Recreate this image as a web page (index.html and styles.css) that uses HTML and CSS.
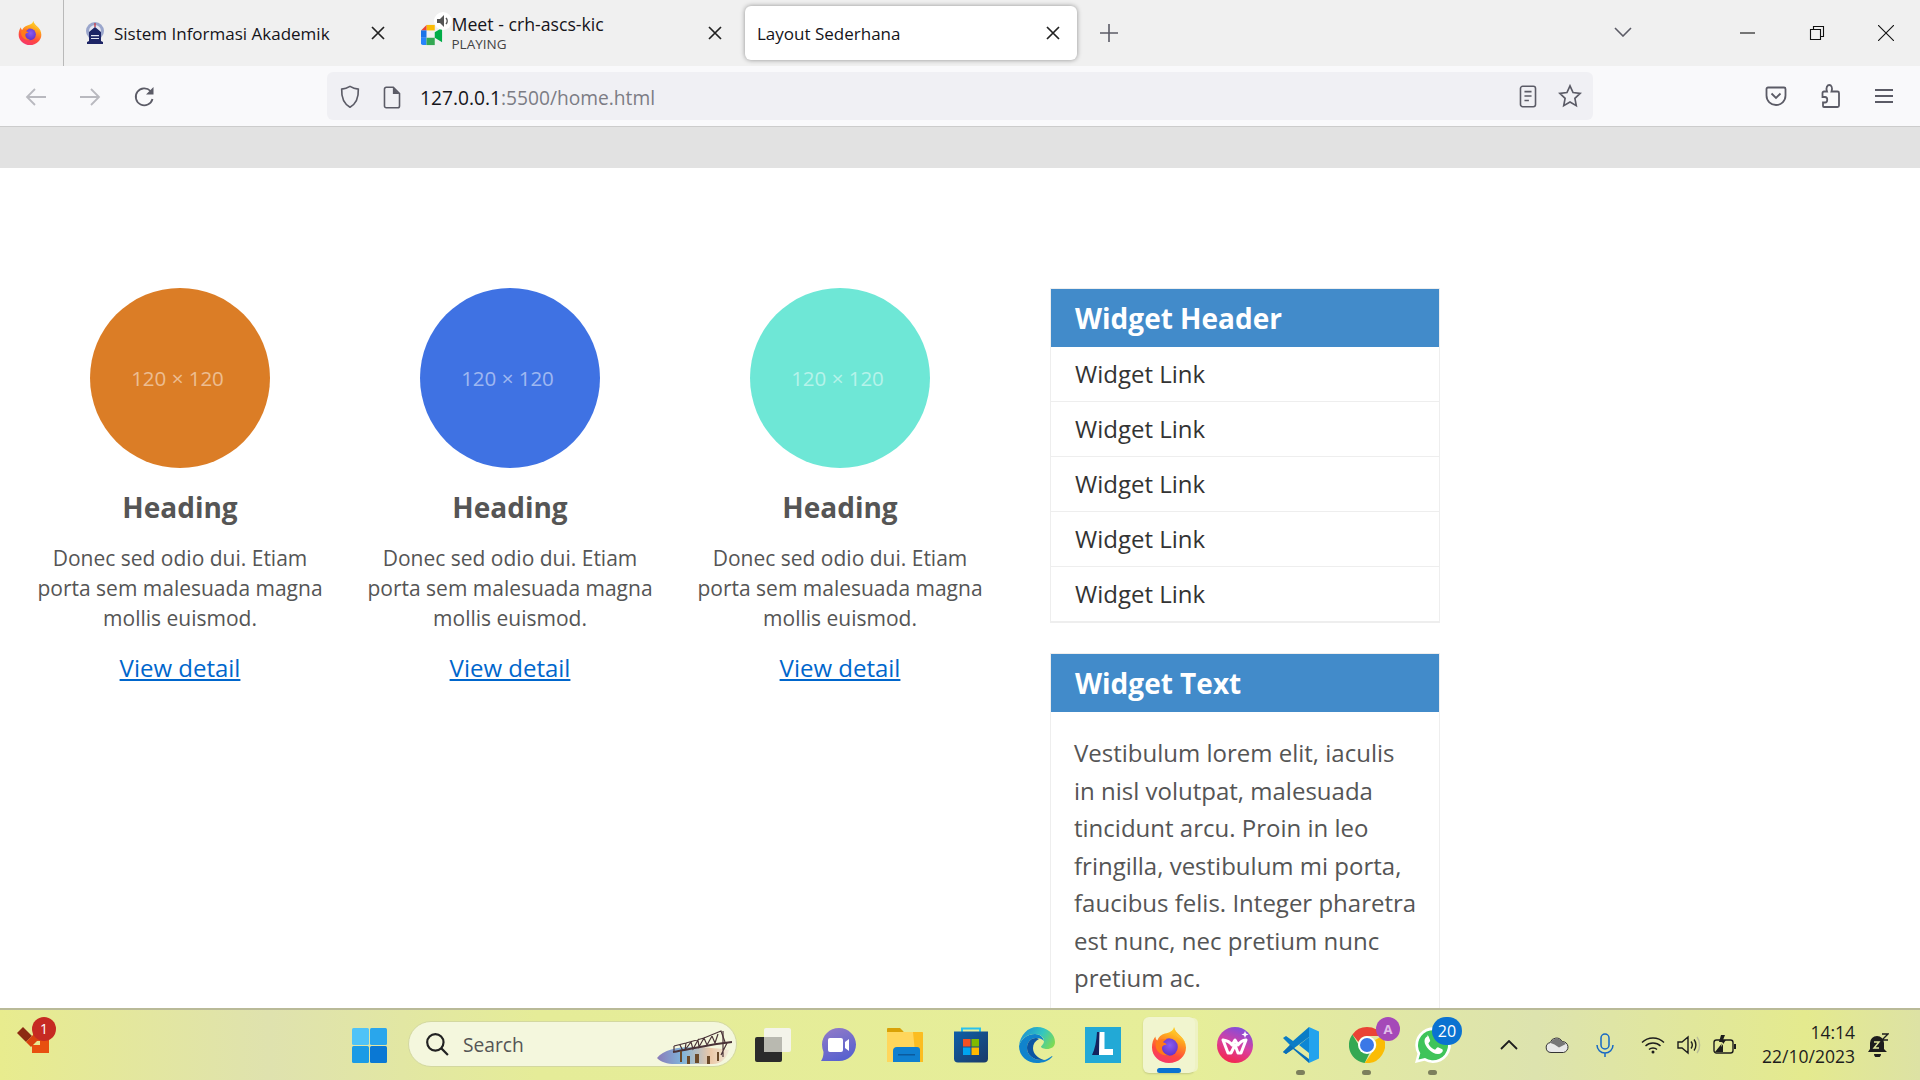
FILE: index.html
```html
<!DOCTYPE html>
<html lang="en">
<head>
  <meta charset="UTF-8" />
  <title>Layout Sederhana</title>
  <link rel="stylesheet" href="styles.css">
</head>
<body>

  <svg class="svg-defs" aria-hidden="true">
    <defs>
      <linearGradient id="ffBody" x1="0.7" y1="0" x2="0.3" y2="1">
        <stop offset="0" stop-color="#ffe226"/>
        <stop offset="0.35" stop-color="#ff9a1f"/>
        <stop offset="0.7" stop-color="#ff4a3d"/>
        <stop offset="1" stop-color="#f5356f"/>
      </linearGradient>
      <radialGradient id="ffCore" cx="0.55" cy="0.4" r="0.7">
        <stop offset="0" stop-color="#8a5cf0"/>
        <stop offset="1" stop-color="#5b2bc4"/>
      </radialGradient>
      <symbol id="firefox" viewBox="0 0 36 36">
        <path fill="url(#ffBody)" d="M23 0c.6 3.600 2.800 5.700 5.600 8.200C32.600 11.800 35 15.800 35 20.500 35 29.300 27.400 36 18 36S1 29.300 1 20.500c0-4.300 1.200-8.400 3.400-11 .1 2 .8 3.300 1.900 4 1.300-3.300 4-6 7.700-6.900C18.400 5.500 22 4.400 23 0z"/>
        <path fill="#ffbd2e" d="M23 0c.6 3.600 2.800 5.700 5.600 8.200 2.700 2.400 4.900 5.400 5.900 8.700-1.800-3.300-4.700-5.500-8-6.800C23.800 7.200 22.500 4 23 0z"/>
        <circle cx="18" cy="20" r="8.800" fill="url(#ffCore)"/>
        <path fill="#ff7a1a" d="M5 15c3-2.400 6.500-3.500 10.800-2.800-1.900.9-3.200 1.800-3.800 3 2 .5 3.300 1.300 3.600 2.500-3.400.2-4.600 1.600-4.600 3.300 0 3.500 3 6.800 7.500 7.300C11.300 29.500 4.600 25 4.600 18c0-1 .1-2 .4-3z"/>
      </symbol>
    </defs>
  </svg>

  <div class="tabbar">
    <div class="ff-btn">
      <svg class="ff-btn-logo"><use href="#firefox"/></svg>
    </div>
    <div class="tabs">
      <div class="tab">
        <svg class="tab-icon" viewBox="0 0 22 22">
          <circle cx="11" cy="9" r="9" fill="#9aa6cc"/>
          <circle cx="11" cy="9" r="6" fill="#e4e6f2"/>
          <path fill="#1d2566" d="M3 22v-2l2-1v-9l6-5 6 5v9l2 1v2z"/>
          <path fill="#c8404a" d="M10.300 1h1.400v4h-1.400z"/>
          <path fill="#e4e6f2" d="M7 13h8v1.200H7zM7 16h8v1H7z"/>
        </svg>
        <span class="tab-title">Sistem Informasi Akademik</span>
        <svg class="tab-close" viewBox="0 0 14 14"><path d="M1 1l12 12M13 1L1 13"/></svg>
      </div>
      <div class="tab tab-meet">
        <span class="meet-wrap">
          <svg class="tab-icon" viewBox="0 0 24 22">
            <path fill="#fbbc04" d="M6 0h9v6H6z"/>
            <path fill="#ea4335" d="M6 0v6H0z"/>
            <path fill="#1a73e8" d="M0 6h6v8H0z"/>
            <path fill="#2684fc" d="M0 14h6v8H2a2 2 0 0 1-2-2z"/>
            <path fill="#34a853" d="M6 14h9v8H6z"/>
            <path fill="#00ac47" d="M15 8l8-5v16l-8-5z"/>
          </svg>
          <span class="speaker">
            <svg viewBox="0 0 14 14"><path fill="#555" d="M1 5h3l4-4v12L4 9H1z"/><path fill="none" stroke="#555" stroke-width="1.500" d="M10 4c1.500 1.600 1.500 4.400 0 6"/></svg>
          </span>
        </span>
        <div class="tab-stack">
          <span class="tab-title">Meet - crh-ascs-kic</span>
          <span class="tab-sub">PLAYING</span>
        </div>
        <svg class="tab-close" viewBox="0 0 14 14"><path d="M1 1l12 12M13 1L1 13"/></svg>
      </div>
      <div class="tab tab-active">
        <span class="tab-title">Layout Sederhana</span>
        <svg class="tab-close" viewBox="0 0 14 14"><path d="M1 1l12 12M13 1L1 13"/></svg>
      </div>
    </div>
    <div class="new-tab">
      <svg viewBox="0 0 18 18"><path d="M9 0v18M0 9h18"/></svg>
    </div>
    <div class="tab-list">
      <svg viewBox="0 0 18 10"><path d="M1 1l8 8 8-8"/></svg>
    </div>
    <div class="win-btn">
      <svg viewBox="0 0 16 16"><path d="M0 8h15"/></svg>
    </div>
    <div class="win-btn">
      <svg viewBox="0 0 16 16"><path d="M1.500 4.500h10v10h-10zM4.500 4.500v-3h10v10h-3"/></svg>
    </div>
    <div class="win-btn">
      <svg viewBox="0 0 16 16"><path d="M0 0l16 16M16 0L0 16"/></svg>
    </div>
  </div>

  <div class="toolbar">
    <div class="nav-btn nav-left nav-off">
      <svg viewBox="0 0 22 20"><path d="M21 10H2M10 2l-8 8 8 8"/></svg>
    </div>
    <div class="nav-btn nav-left nav-off">
      <svg viewBox="0 0 22 20"><path d="M1 10h19M12 2l8 8-8 8"/></svg>
    </div>
    <div class="nav-btn nav-left">
      <svg viewBox="0 0 22 22"><path d="M19.500 13a8.500 8.500 0 1 1-2-8"/><path class="solid" d="M20.500 1v7.500H13z"/></svg>
    </div>
    <div class="urlbar">
      <svg class="url-icon url-shield" viewBox="0 0 22 26"><path d="M11 1.500c3 1.800 6 2.700 9 3 .4 9-2.500 16-9 19.500C4.500 20.500 1.600 13.500 2 4.500c3-.3 6-1.200 9-3z"/></svg>
      <svg class="url-icon url-page" viewBox="0 0 20 26"><path d="M3.500 1.500h8l7 7v14a2 2 0 0 1-2 2h-13a2 2 0 0 1-2-2v-19a2 2 0 0 1 2-2z"/><path class="solid" d="M11 1.500l7.500 7.500H11z"/></svg>
      <span class="url-text"><span class="url-host">127.0.0.1</span>:5500/home.html</span>
      <svg class="url-icon url-reader" viewBox="0 0 20 26"><rect x="1.500" y="1.500" width="17" height="23" rx="2.500"/><path d="M6 7.500h8M6 12.500h8M6 17.500h5"/></svg>
      <svg class="url-icon url-star" viewBox="0 0 26 26"><path d="M13 2l3.300 7.300 7.700.9-5.700 5.300 1.500 7.900L13 19.500l-6.800 3.900 1.500-7.900L2 10.200l7.700-.9z"/></svg>
    </div>
    <div class="nav-btn">
      <svg viewBox="0 0 22 22"><path d="M3 2.500h16a1.500 1.500 0 0 1 1.500 1.500v6.500c0 5.500-4.300 9.500-9.500 9.500s-9.500-4-9.500-9.500V4A1.500 1.500 0 0 1 3 2.500z"/><path d="M6.500 8.500L11 13l4.500-4.500"/></svg>
    </div>
    <div class="nav-btn nav-puzzle">
      <svg viewBox="0 0 22 24"><path d="M12.500 7.500h6a1.500 1.500 0 0 1 1.500 1.500v12.500a1.500 1.500 0 0 1-1.500 1.500H5a1 1 0 0 1-1-1v-3.500h2c3 0 3-5.500 0-5.500H3.500V9A1.500 1.500 0 0 1 5 7.500h3C6.500 3.500 8.500 1 10.300 1s3.700 2.500 2.200 6.500z"/></svg>
    </div>
    <div class="nav-btn nav-menu">
      <svg viewBox="0 0 20 16"><path d="M1 2h18M1 8h18M1 14h18"/></svg>
    </div>
  </div>

  <main class="page">
    <div class="band"></div>
    <div class="container">
      <section class="features">
        <article class="feature">
          <div class="thumb thumb-orange"><span>120 × 120</span></div>
          <h2>Heading</h2>
          <p>Donec sed odio dui. Etiam porta sem malesuada magna mollis euismod.</p>
          <a href="#">View detail</a>
        </article>
        <article class="feature">
          <div class="thumb thumb-blue"><span>120 × 120</span></div>
          <h2>Heading</h2>
          <p>Donec sed odio dui. Etiam porta sem malesuada magna mollis euismod.</p>
          <a href="#">View detail</a>
        </article>
        <article class="feature">
          <div class="thumb thumb-teal"><span>120 × 120</span></div>
          <h2>Heading</h2>
          <p>Donec sed odio dui. Etiam porta sem malesuada magna mollis euismod.</p>
          <a href="#">View detail</a>
        </article>
      </section>
      <aside class="sidebar">
        <div class="widget">
          <h3 class="widget-header">Widget Header</h3>
          <ul class="widget-links">
            <li>Widget Link</li>
            <li>Widget Link</li>
            <li>Widget Link</li>
            <li>Widget Link</li>
            <li>Widget Link</li>
          </ul>
        </div>
        <div class="widget">
          <h3 class="widget-header">Widget Text</h3>
          <p class="widget-text">Vestibulum lorem elit, iaculis in nisl volutpat, malesuada tincidunt arcu. Proin in leo fringilla, vestibulum mi porta, faucibus felis. Integer pharetra est nunc, nec pretium nunc pretium ac.</p>
        </div>
      </aside>
    </div>
  </main>

  <footer class="taskbar">
    <div class="task-alert">
      <svg viewBox="0 0 41 35">
        <path fill="#e8500f" d="M18 16h16v19H17v-8h8v-4h-7z"/>
        <path fill="#8c2a12" d="M2 15l6-6 9 9-6 6z"/>
        <path fill="#d9430f" d="M11 24L22 13l5 5-11 11z"/>
      </svg>
      <span class="alert-badge">1</span>
    </div>
    <div class="task-start">
      <svg viewBox="0 0 35 35">
        <rect x="0" y="0" width="17" height="17" rx="1.500" fill="#4fc3f7"/>
        <rect x="18" y="0" width="17" height="17" rx="1.500" fill="#29a6ec"/>
        <rect x="0" y="18" width="17" height="17" rx="1.500" fill="#1a9be6"/>
        <rect x="18" y="18" width="17" height="17" rx="1.500" fill="#0a78d4"/>
      </svg>
    </div>
    <div class="task-search">
      <svg class="search-icon" viewBox="0 0 22 22"><circle cx="9.500" cy="9.500" r="7.500"/><path d="M15 15l6 6"/></svg>
      <span class="search-text">Search</span>
      <svg class="search-art" viewBox="0 0 76 36">
        <defs>
          <linearGradient id="bay" x1="0" y1="0" x2="1" y2="0">
            <stop offset="0" stop-color="#8a7bb8"/>
            <stop offset="0.35" stop-color="#7fb4dc"/>
            <stop offset="0.75" stop-color="#ecc9a8"/>
            <stop offset="1" stop-color="#f0e8d8"/>
          </linearGradient>
        </defs>
        <path fill="url(#bay)" d="M0 29c6-8 20-11 36-11s28 2 36 3c-2 8-8 14-16 14H18C10 35 4 33 0 29z"/>
        <path fill="none" stroke="#4a3338" stroke-width="2" d="M16 23c18-3 38-8 59-10"/>
        <path fill="none" stroke="#4a3338" stroke-width="1.200" d="M17 17l12-3 18-5 17-7 4 11M17 17v6M23 16l3 6M29 14l-1 7 6-8 2 7 5-9 1 7 5-9 3 7 5-9 3 7 3-9"/>
        <path fill="#6b4a2a" d="M23 22h2v11h-2zM30 27h3v8h-3zM38 25h4v9h-4zM50 27h3v8h-3zM60 23h2v9h-2z"/>
        <path fill="none" stroke="#4a3338" stroke-width="1.200" d="M66 2v26M70 14l-6 12"/>
      </svg>
    </div>
    <div class="task-apps">
      <div class="app">
        <svg viewBox="0 0 36 34">
          <rect x="0" y="9" width="27" height="25" rx="2" fill="#2b2b2b"/>
          <rect x="9" y="0" width="27" height="24" rx="2" fill="#f4f4ea"/>
          <rect x="9" y="9" width="18" height="15" fill="#b9b9b0"/>
        </svg>
      </div>
      <div class="app app-chat">
        <svg viewBox="0 0 36 36">
          <defs>
            <linearGradient id="chatBg" x1="0.3" y1="0" x2="0.7" y2="1">
              <stop offset="0" stop-color="#8e79c8"/>
              <stop offset="1" stop-color="#5560cf"/>
            </linearGradient>
          </defs>
          <path fill="url(#chatBg)" d="M19 1c9.500 0 17 7.500 17 16.500S28.500 34 19 34H1c1.500-2 2.500-5 2.500-9C2.500 22.500 2 20 2 17.500 2 8.500 9.500 1 19 1z"/>
          <rect x="8" y="11" width="15" height="14" rx="2" fill="#fff"/>
          <path fill="#fff" d="M25 15l4-3v12l-4-3z"/>
        </svg>
      </div>
      <div class="app">
        <svg viewBox="0 0 36 34">
          <path fill="#d9a106" d="M0 1a1 1 0 0 1 1-1h12l3 3 2 3H0z"/>
          <path fill="#ffd65c" d="M0 4h35a1 1 0 0 1 1 1v29H0z"/>
          <path fill="#fbbd21" d="M26 4h9a1 1 0 0 1 1 1v29h-7z"/>
          <path fill="#0f7fd0" d="M6 23a4 4 0 0 1 4-4h20a3 3 0 0 1 3 3v12H6z"/>
          <path fill="#0b5b9e" d="M11 26h17v1.500H11z"/>
        </svg>
      </div>
      <div class="app">
        <svg viewBox="0 0 36 36">
          <defs>
            <linearGradient id="storeBg" x1="0" y1="0" x2="1" y2="1">
              <stop offset="0" stop-color="#0e5fa8"/>
              <stop offset="1" stop-color="#1b3a68"/>
            </linearGradient>
          </defs>
          <path fill="none" stroke="#28c2ee" stroke-width="2" d="M9 7V1.500h18V7"/>
          <path fill="url(#storeBg)" d="M1 4.500h34v27a4 4 0 0 1-4 4H5a4 4 0 0 1-4-4z"/>
          <rect x="10" y="12" width="7.500" height="7.500" fill="#f25022"/>
          <rect x="18.500" y="12" width="7.500" height="7.500" fill="#7fba00"/>
          <rect x="10" y="20.500" width="7.500" height="7.500" fill="#00a4ef"/>
          <rect x="18.500" y="20.500" width="7.500" height="7.500" fill="#ffb900"/>
        </svg>
      </div>
      <div class="app">
        <svg viewBox="0 0 36 36">
          <defs>
            <linearGradient id="edgeTop" x1="0" y1="0.3" x2="1" y2="0.7">
              <stop offset="0" stop-color="#1a8fd4"/>
              <stop offset="0.55" stop-color="#33c6c0"/>
              <stop offset="1" stop-color="#7edb52"/>
            </linearGradient>
          </defs>
          <path fill="#1083cc" d="M0 19C2 12 8 7 16 7c5 0 8 3 9 7-3-3-6-3-8-3-5 0-9 4-9 10 0 7 7 13 17 12 2 0 5-2 8-4l.5.500C30 34 24 36 18 36 8 36 0 29 0 19z"/>
          <path fill="#0b55a3" d="M17 11c-5 0-9 4-9 10 0 7 7 13 17 12-6-2-11-6-11-12 0-4 2-7 6-9-1-.7-2-1-3-1z"/>
          <path fill="url(#edgeTop)" d="M0 19C1 8 9 0 18 0c10 0 18 7 18 15 0 5-4 7-8 7-3 0-6-1-6-2.500 1-1.500 3-2.500 3-5.500 0-4-4-7-9-7C8 7 2 12 0 19z"/>
        </svg>
      </div>
      <div class="app">
        <svg viewBox="0 0 36 36">
          <rect width="36" height="36" fill="#22a9d6"/>
          <path fill="#14225e" d="M12 5h3l-1 23H7c3-6 4.500-14 5-23z"/>
          <path fill="#fff" d="M14.500 5h5v17H28v6H14z"/>
        </svg>
      </div>
      <div class="app app-active">
        <svg viewBox="0 0 36 36"><use href="#firefox"/></svg>
      </div>
      <div class="app">
        <svg viewBox="0 0 36 36">
          <defs>
            <linearGradient id="wpsBg" x1="0.7" y1="0" x2="0.3" y2="1">
              <stop offset="0" stop-color="#7b4fe0"/>
              <stop offset="0.5" stop-color="#d93fa0"/>
              <stop offset="1" stop-color="#f5264a"/>
            </linearGradient>
          </defs>
          <circle cx="18" cy="18" r="18" fill="url(#wpsBg)"/>
          <path fill="none" stroke="#fff" stroke-width="3" stroke-linejoin="round" d="M6 13l5 13h3l4-8 3 8h3l5-13c-4 .5-6 2-8 5l-3-5-3 5c-2-3-5-4.500-9-5z"/>
          <path fill="#fff" d="M28 4l1 2.500 2.500 1-2.500 1L28 11l-1-2.500-2.500-1 2.500-1z"/>
        </svg>
      </div>
      <div class="app app-open">
        <svg viewBox="0 0 36 36">
          <path fill="#22a3ee" d="M26 0l10 4.500v27L26 36z"/>
          <path fill="#0a7cc6" d="M26 0v10L10 22 3 27 0 25l7-7L0 11l3-2 7 5z"/>
          <path fill="#0a6fb8" d="M26 36l-16-14-7 5-3-2 7-7 19 14z"/>
          <path fill="#0c86d4" d="M26 10v16l-10-8z"/>
        </svg>
      </div>
      <div class="app app-open">
        <svg viewBox="0 0 36 36">
          <path fill="#ea4335" d="M18 0a18 18 0 0 1 15.600 9H18a9 9 0 0 0-8.500 6L3.400 7.400A18 18 0 0 1 18 0z"/>
          <path fill="#34a853" d="M3.400 7.400L10 18.500a9 9 0 0 0 10.800 7L15.700 35.900A18 18 0 0 1 3.400 7.400z"/>
          <path fill="#fbbc04" d="M33.600 9A18 18 0 0 1 15.700 35.900L23.500 25A9 9 0 0 0 26 13z"/>
          <circle cx="18" cy="18" r="9" fill="#fff"/>
          <circle cx="18" cy="18" r="7" fill="#3b78e7"/>
        </svg>
        <span class="app-avatar">A</span>
      </div>
      <div class="app app-open">
        <svg viewBox="0 0 36 36">
          <path fill="#fff" d="M0 36l2.500-9.300A17.800 17.800 0 1 1 9.500 33.700z"/>
          <path fill="#3fc45a" d="M3.500 32.500l1.800-6.200A15 15 0 1 1 10 31z"/>
          <path fill="#fff" d="M12.500 9.500c-1 0-3 1.500-3 4.500 0 5.500 7 13 13.500 13 3 0 4.800-2 4.800-3.500 0-.8-.3-1.200-1-1.500l-3.300-1.600c-.7-.3-1.200-.2-1.700.4l-1.200 1.400c-.3.400-.7.400-1.200.2-2.500-1-4.700-3.200-5.800-5.500-.2-.5-.2-.9.200-1.200l1-1.200c.4-.5.500-1 .2-1.600l-1.400-3.300c-.3-.7-.7-1-1.600-1z"/>
        </svg>
        <span class="app-count">20</span>
      </div>
    </div>
    <div class="tray">
      <div class="tray-item">
        <svg class="tray-chevron" viewBox="0 0 18 10"><path d="M1 9l8-8 8 8"/></svg>
      </div>
      <div class="tray-item">
        <svg class="tray-cloud" viewBox="0 0 24 16">
          <path fill="#e8e8e8" stroke="#333" stroke-width="1" d="M6 15.500a5 5 0 0 1-.8-9.900 6.500 6.500 0 0 1 12-1A5.500 5.500 0 0 1 18.500 15.500z"/>
          <path fill="#777" d="M5.500 6a6.500 6.500 0 0 1 11.700-1.300c1 .1 2.500.7 3.600 2.300L14 10.500 9.500 7.500z"/>
        </svg>
      </div>
      <div class="tray-item">
        <svg class="tray-mic" viewBox="0 0 18 24"><rect x="5" y="1" width="8" height="15" rx="4"/><path d="M1 12a8 8 0 0 0 16 0M9 20v4"/></svg>
      </div>
      <div class="tray-item tray-wifi">
        <svg viewBox="0 0 24 18"><path d="M1 6.500c6-6 16-6 22 0M4.500 10c4-4 11-4 15 0M8 13.500c2-2 6-2 8 0"/><circle class="solid" cx="12" cy="16" r="1.500"/></svg>
      </div>
      <div class="tray-item tray-vol">
        <svg viewBox="0 0 24 20"><path d="M1 7h4l6-5v16l-6-5H1zM14 6.500c1.500 2 1.500 5 0 7M17 4.500c2.500 3 2.500 8 0 11"/><path class="faint" d="M20 2c3.500 4.500 3.500 11.500 0 16"/></svg>
      </div>
      <div class="tray-item tray-batt">
        <svg viewBox="0 0 24 20"><rect x="1" y="5" width="19" height="13" rx="2.500"/><path class="solid" d="M21 9h2v5h-2zM2 17l8-10v10zM8 0l-2 7h3l-1 5 5-7h-3l2-5z"/></svg>
      </div>
      <div class="clock">
        <span>14:14</span>
        <span>22/10/2023</span>
      </div>
      <div class="tray-bell">
        <svg viewBox="0 0 22 24">
          <path fill="#1d1d1d" d="M10 3a7 7 0 0 1 7 7v6l3 3H1l2-3v-6a7 7 0 0 1 7-7zM7 21h7a3.500 3.500 0 0 1-7 0z"/>
          <path fill="none" stroke="#e4ea9e" stroke-width="1.400" d="M7 9h5l-5 6h5"/>
          <path fill="none" stroke="#1d1d1d" stroke-width="1.400" d="M15 1h6l-6 6h6"/>
        </svg>
      </div>
    </div>
  </footer>

</body>
</html>
```

FILE: styles.css
```css
:root {
  --chrome-text: #15141a;
  --icon: #5b5b66;
  --widget-blue: #428bca;
  --page-text: #555;
}

* {
  box-sizing: border-box;
}

html, body {
  height: 100%;
}

body {
  margin: 0;
  font-family: "Open Sans", sans-serif;
  background-color: #fff;
  display: flex;
  flex-direction: column;
  overflow: hidden;
}

.svg-defs {
  display: block;
  width: 0;
  height: 0;
}

svg {
  display: block;
  flex-shrink: 0;
}

/* tab strip */
.tabbar {
  height: 66px;
  flex-shrink: 0;
  display: flex;
  align-items: center;
  background-color: #f0f0f0;
}

.ff-btn {
  width: 64px;
  height: 66px;
  border-right: 1px solid #b9b9b9;
  padding-left: 18px;
  display: flex;
  align-items: center;
}

.ff-btn-logo {
  width: 24px;
  height: 24px;
}

.tabs {
  display: flex;
  gap: 4.5px;
  padding-left: 8px;
}

.tab {
  width: 332px;
  height: 54px;
  padding: 0 19px 0 12px;
  display: flex;
  align-items: center;
  font-size: 17px;
  color: var(--chrome-text);
  position: relative;
}

.tab-active {
  padding-right: 17px;
  background-color: #fff;
  border-radius: 6px;
  box-shadow: 0 0 5px rgba(0, 0, 0, 0.4);
}

.tab-icon {
  width: 22px;
  height: 22px;
  margin-right: 8px;
}

.tab-title {
  white-space: nowrap;
}

.tab-close {
  width: 14px;
  height: 14px;
  margin-left: auto;
  fill: none;
  stroke: #222;
  stroke-width: 1.7;
}

.tab-stack {
  display: flex;
  flex-direction: column;
}

.tab-stack .tab-title {
  font-size: 17.7px;
  line-height: 21px;
}

.tab-sub {
  font-size: 13.5px;
  line-height: 18px;
  color: #444;
}

.meet-wrap {
  position: relative;
}

.meet-wrap .tab-icon {
  margin-top: 4px;
  margin-right: 9px;
}

.speaker {
  position: absolute;
  left: 13px;
  top: -8px;
  width: 18px;
  height: 18px;
  border-radius: 50%;
  background-color: #fff;
  padding: 2px;
}

.new-tab {
  width: 40px;
  margin-left: 12px;
  display: flex;
  justify-content: center;
}

.new-tab svg {
  width: 18px;
  height: 18px;
  stroke: var(--icon);
  stroke-width: 1.6;
}

.tab-list {
  width: 40px;
  margin-left: auto;
  margin-right: 70px;
  display: flex;
  justify-content: center;
  margin-top: -2px;
}

.tab-list svg {
  width: 18px;
  height: 10px;
  fill: none;
  stroke: var(--icon);
  stroke-width: 1.6;
}

.win-btn {
  width: 69px;
  display: flex;
  justify-content: center;
}

.win-btn svg {
  width: 16px;
  height: 16px;
  fill: none;
  stroke: #111;
  stroke-width: 1.1;
}

/* nav toolbar */
.toolbar {
  height: 61px;
  flex-shrink: 0;
  display: flex;
  align-items: flex-start;
  padding: 6px 9px 0;
  background-color: #f9f9fb;
  border-bottom: 1px solid #ccc;
}

.nav-btn {
  width: 54px;
  height: 48px;
  display: flex;
  align-items: center;
  justify-content: center;
}

.nav-left {
  padding-top: 2px;
}

.nav-btn svg {
  width: 22px;
  height: 22px;
  fill: none;
  stroke: var(--icon);
  stroke-width: 1.8;
}

.nav-off svg {
  stroke: #b9b9bf;
}

.nav-puzzle svg {
  width: 22px;
  height: 24px;
}

.nav-menu svg {
  width: 20px;
  height: 16px;
}

.solid {
  fill: var(--icon);
  stroke: none;
}

.urlbar {
  width: 1266px;
  height: 48px;
  margin: 0 156px;
  padding: 0 11px 0 12px;
  display: flex;
  align-items: center;
  background-color: #f0f0f4;
  border-radius: 6px;
  font-size: 19.2px;
  color: #7c7c84;
}

.url-icon {
  fill: none;
  stroke: var(--icon);
  stroke-width: 1.8;
}

.url-shield {
  width: 22px;
  height: 24px;
  margin-top: 2px;
}

.url-page {
  width: 18px;
  height: 23px;
  margin-left: 22px;
  margin-top: 2px;
}

.url-text {
  margin-left: 19px;
  margin-top: 2px;
  white-space: nowrap;
}

.url-host {
  color: var(--chrome-text);
}

.url-reader {
  width: 18px;
  height: 23px;
  margin-left: auto;
}

.url-star {
  width: 24px;
  height: 24px;
  margin-left: 21px;
}

/* page content */
.page {
  flex: 1;
  min-height: 0;
  overflow: hidden;
}

.band {
  height: 41px;
  background-color: #e2e2e2;
}

.container {
  display: flex;
  padding: 120px 0 0 15px;
}

.features {
  width: 990px;
  display: flex;
}

.feature {
  width: 330px;
  padding: 0 15px;
  text-align: center;
  color: var(--page-text);
}

.thumb {
  width: 180px;
  height: 180px;
  margin: 0 auto;
  border-radius: 50%;
  display: flex;
  align-items: center;
  justify-content: center;
  padding: 0 5px 1px 0;
  font-size: 20.5px;
  color: rgba(255, 255, 255, 0.5);
}

.thumb-orange {
  background-color: #db7d26;
}

.thumb-blue {
  background-color: #3f72e3;
}

.thumb-teal {
  background-color: #6ee7d6;
}

.feature h2 {
  margin: 22px 0 19px;
  font-size: 28px;
  line-height: 34px;
}

.feature p {
  margin: 0 0 17px;
  font-size: 21px;
  line-height: 30px;
}

.feature a {
  font-size: 24px;
  line-height: 36px;
  color: #06c;
}

.sidebar {
  width: 390px;
  margin-left: 45px;
}

.widget {
  border: 1px solid #eee;
  border-bottom-width: 2px;
  margin-bottom: 30px;
}

.widget-header {
  margin: 0;
  height: 58px;
  padding-left: 24px;
  font-size: 28px;
  line-height: 58px;
  color: #fff;
  background-color: var(--widget-blue);
}

.widget-links {
  margin: 0;
  padding: 0;
  list-style: none;
}

.widget-links li {
  height: 55px;
  padding-left: 24px;
  font-size: 24px;
  line-height: 54px;
  color: #333;
  border-bottom: 1px solid #eee;
}

.widget-links li:last-child {
  height: 54px;
  border-bottom: none;
}

.widget-text {
  margin: 0;
  padding: 22px 20px 22px 23px;
  font-size: 24px;
  line-height: 37.5px;
  color: var(--page-text);
}

/* windows taskbar */
.taskbar {
  height: 72px;
  flex-shrink: 0;
  display: flex;
  align-items: center;
  padding-left: 15px;
  border-top: 2px solid #b9ba98;
  background: linear-gradient(90deg, #e8ec8e 0%, #dfe2ae 14%, #e5ec98 28%, #e6ee99 62%, #dde3ae 80%, #e4ea8e 94%, #dde2a4 100%);
}

.task-alert {
  width: 41px;
  height: 35px;
  align-self: flex-start;
  margin-top: 8px;
  position: relative;
}

.alert-badge {
  position: absolute;
  left: 17px;
  top: -1px;
  width: 24px;
  height: 24px;
  border-radius: 50%;
  background-color: #c62a22;
  color: #fff;
  font-size: 14px;
  line-height: 24px;
  text-align: center;
}

.task-start {
  width: 66px;
  margin-left: 280px;
  display: flex;
  justify-content: center;
}

.task-start svg {
  width: 35px;
  height: 35px;
}

.task-search {
  width: 329px;
  height: 46px;
  margin-left: 6px;
  margin-top: -2px;
  padding: 0 3px 0 16px;
  display: flex;
  align-items: center;
  background-color: #f4f7dd;
  border: 1px solid #d3d8a0;
  border-radius: 23px;
  overflow: hidden;
}

.search-icon {
  width: 24px;
  height: 24px;
  fill: none;
  stroke: #222;
  stroke-width: 2;
}

.search-text {
  margin-left: 14px;
  font-size: 19.2px;
  color: #555;
}

.search-art {
  width: 76px;
  height: 36px;
  margin-left: auto;
  margin-top: 6px;
}

.task-apps {
  display: flex;
  margin-left: 3px;
}

.app {
  width: 66px;
  height: 56px;
  display: flex;
  align-items: center;
  justify-content: center;
  position: relative;
}

.app svg {
  width: 36px;
  height: 36px;
}

.app-chat {
  padding-right: 2px;
}

.app-active {
  width: 52px;
  margin: 0 7px;
  background-color: #f1f5cf;
  border-radius: 6px;
  box-shadow: 4px 0 0 -1px #eef2c4, 0 1px 2px rgba(0, 0, 0, 0.15);
}

.app-active::after {
  content: "";
  position: absolute;
  left: 14px;
  bottom: 0;
  width: 24px;
  height: 5px;
  border-radius: 3px;
  background-color: #0a72d1;
}

.app-open::after {
  content: "";
  position: absolute;
  left: 28px;
  bottom: -2px;
  width: 9px;
  height: 5px;
  border-radius: 3px;
  background-color: #7c7f5c;
}

.app-avatar {
  position: absolute;
  left: 42px;
  top: 0;
  width: 24px;
  height: 24px;
  border-radius: 50%;
  background-color: #a549b8;
  color: #e2bdea;
  font-size: 13px;
  font-weight: 700;
  line-height: 24px;
  text-align: center;
}

.app-count {
  position: absolute;
  left: 32px;
  top: 0;
  width: 30px;
  height: 28px;
  border-radius: 14px;
  background-color: #0a72d1;
  color: #fff;
  font-size: 16px;
  line-height: 28px;
  text-align: center;
}

.tray {
  display: flex;
  align-items: center;
  flex: 1;
  margin-left: 19px;
  padding-right: 24px;
}

.tray-item {
  width: 48px;
  display: flex;
  justify-content: center;
}

.tray-chevron {
  width: 18px;
  height: 10px;
  fill: none;
  stroke: #1d1d1d;
  stroke-width: 1.8;
}

.tray-cloud {
  width: 24px;
  height: 16px;
}

.tray-mic {
  width: 18px;
  height: 24px;
  fill: none;
  stroke: #1668c4;
  stroke-width: 1.5;
}

.tray-wifi {
  width: 34px;
  margin-left: 7px;
}

.tray-vol {
  width: 36px;
  padding-left: 2px;
}

.tray-batt {
  width: 38px;
}

.tray-wifi svg,
.tray-vol svg,
.tray-batt svg {
  width: 24px;
  height: 20px;
  fill: none;
  stroke: #1d1d1d;
  stroke-width: 1.4;
}

.tray .solid {
  fill: #1d1d1d;
}

.faint {
  stroke: #b9bd98;
}

.clock {
  margin-left: auto;
  margin-right: 5px;
  margin-top: -3px;
  display: flex;
  flex-direction: column;
  align-items: flex-end;
  font-size: 17.5px;
  line-height: 24px;
  color: #1d1d1d;
}

.tray-bell {
  width: 36px;
  display: flex;
  justify-content: center;
}

.tray-bell svg {
  width: 22px;
  height: 24px;
}
```
